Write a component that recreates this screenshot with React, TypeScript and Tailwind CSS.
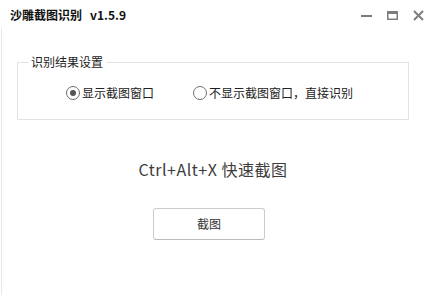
import React from "react";

function Radio({ checked, label }: { checked?: boolean; label: string }) {
  return (
    <label className="flex items-center gap-[2px]">
      <span className="flex h-[14px] w-[14px] items-center justify-center rounded-full border border-[#6f6f6f] bg-white">
        {checked && <span className="h-[6px] w-[6px] rounded-full bg-[#555555]" />}
      </span>
      <span className="text-[12px] leading-[16px] text-[#222222]">{label}</span>
    </label>
  );
}

export default function App() {
  return (
    <div className="flex h-[295px] w-[436px] flex-col overflow-hidden bg-white font-['Noto_Sans_CJK_SC','Liberation_Sans',sans-serif]">
      <div className="flex h-[28px] items-center pl-[10px] pr-[12px] pt-[2px]">
        <span className="text-[12px] font-bold leading-[16px] text-[#111111]">沙雕截图识别</span>
        <span className="ml-[8px] text-[12px] font-bold leading-[16px] text-[#111111]">v1.5.9</span>
        <div className="ml-auto flex items-center gap-[15px]">
          <svg width="11" height="11" viewBox="0 0 11 11">
            <rect x="0" y="5" width="11" height="2" fill="#7d7d7d" />
          </svg>
          <svg width="11" height="11" viewBox="0 0 11 11">
            <rect x="0.75" y="1.75" width="9.5" height="7.5" fill="none" stroke="#7d7d7d" strokeWidth="1.5" />
            <rect x="0" y="1" width="11" height="3" fill="#7d7d7d" />
          </svg>
          <svg width="11" height="11" viewBox="0 0 11 11">
            <path d="M1 1 L10 10 M10 1 L1 10" stroke="#7d7d7d" strokeWidth="2" />
          </svg>
        </div>
      </div>
      <div className="ml-[1px] flex flex-1 flex-col border-l border-[#e8e8e8]">
        <fieldset className="ml-[15px] mt-[26px] w-[392px] border border-[#e3e3e3] pb-[18px] pt-[15px]">
          <legend className="ml-[10px] px-[3px] text-[12px] leading-[16px] text-[#222222]">识别结果设置</legend>
          <div className="flex items-center gap-[39px] pl-[48px]">
            <Radio checked label="显示截图窗口" />
            <Radio label="不显示截图窗口，直接识别" />
          </div>
        </fieldset>
        <div className="ml-[15px] mt-[38px] w-[392px] text-center text-[16px] leading-[22px] tracking-[0.5px] text-[#3c3c3c]">
          Ctrl+Alt+X 快速截图
        </div>
        <button className="ml-[151px] mt-[28px] flex h-[32px] w-[112px] items-center justify-center self-start rounded-[3px] border border-[#cccccc] border-b-[#bbbbbb] bg-white text-[12px] text-[#333333]">
          截图
        </button>
      </div>
    </div>
  );
}
